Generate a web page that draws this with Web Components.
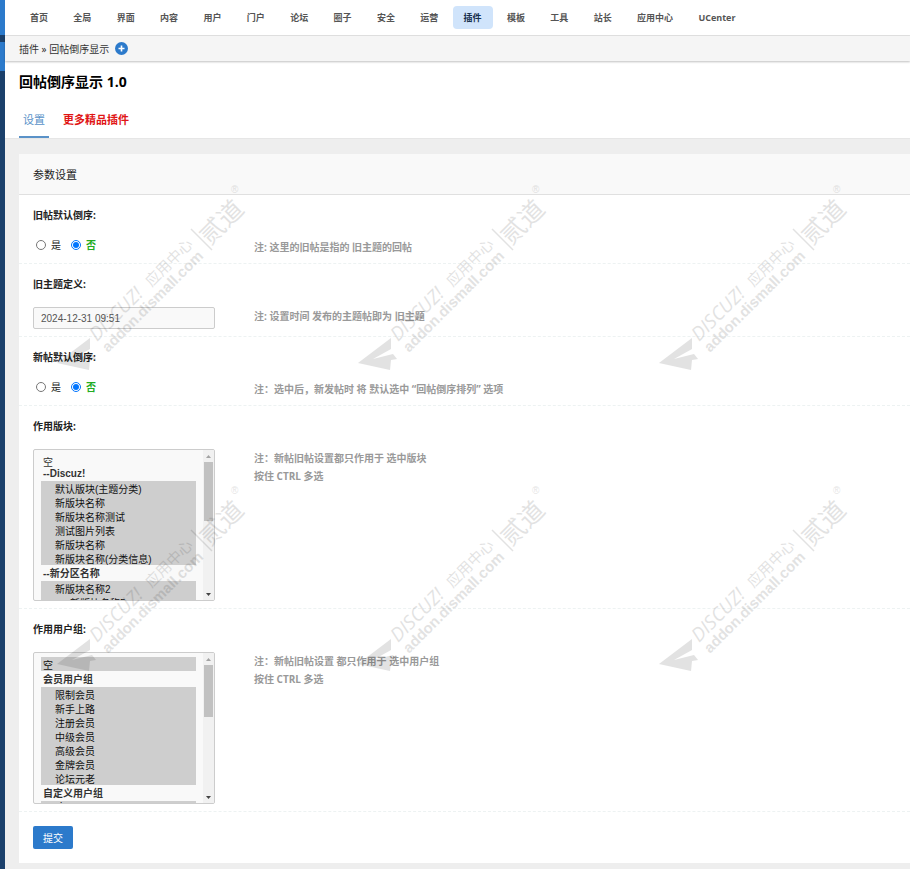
<!DOCTYPE html>
<html lang="zh-CN">
<head>
<meta charset="utf-8">
<title>回帖倒序显示 1.0</title>
<style>
  body {
    margin: 0;
    background: #eee;
    color: #222;
    font: 10px/14px "Open Sans", "Noto Sans CJK SC", sans-serif;
  }
</style>
</head>
<body>
<admin-shell>
  <top-nav slot="nav"></top-nav>
  <bread-crumb slot="crumb"></bread-crumb>
  <plugin-head slot="head"></plugin-head>
  <settings-panel></settings-panel>
</admin-shell>

<script>
class AdminShell extends HTMLElement {
  constructor() {
    super();
    this.attachShadow({ mode: 'open' });
  }

  connectedCallback() {
    this.shadowRoot.innerHTML = `
    <style>
      :host {
        display: flex;
        position: relative;
        min-height: 100vh;
      }

      aside {
        flex: none;
        width: 5px;
        background: linear-gradient(#2c7acb 35px, #1b406b 35px 42px, #2c7acb 42px 71px, #1b406b 71px);
      }

      .page {
        flex: 1;
        min-width: 0;
      }

      main {
        padding: 15px 0 6px 14px;
      }
    </style>
    <aside></aside>
    <div class="page">
      <slot name="nav"></slot>
      <slot name="crumb"></slot>
      <slot name="head"></slot>
      <main><slot></slot></main>
    </div>
    <water-mark></water-mark>
    `;
  }
}

class TopNav extends HTMLElement {
  constructor() {
    super();
    this.attachShadow({ mode: 'open' });
  }

  menus = ['首页', '全局', '界面', '内容', '用户', '门户', '论坛', '圈子', '安全', '运营', '插件', '模板', '工具', '站长', '应用中心', 'UCenter'];

  connectedCallback() {
    const items = this.menus.map(menu => `
      <a href="#" ${menu === '插件' ? 'class="active"' : ''}>${menu}</a>`
    ).join('');

    this.shadowRoot.innerHTML = `
    <style>
      :host {
        display: block;
        background: #fff;
        border-bottom: 1px solid #e2e2e2;
      }

      nav {
        padding: 6px 14px;
        font-family: "Liberation Sans", sans-serif;
        font-size: 12px;
        line-height: 23px;
        white-space: nowrap;
        overflow: hidden;
      }

      a {
        display: inline-block;
        vertical-align: top;
        padding: 0 11px;
        border-radius: 4px;
        color: #555;
        font: bold 9px/23px "Open Sans", "Noto Sans CJK SC", sans-serif;
        text-decoration: none;
      }

      .active {
        background: #d0e4fb;
        color: #17304d;
      }
    </style>
    <nav>${items}</nav>
    `;
  }
}

class BreadCrumb extends HTMLElement {
  constructor() {
    super();
    this.attachShadow({ mode: 'open' });
  }

  connectedCallback() {
    this.shadowRoot.innerHTML = `
    <style>
      :host {
        display: flex;
        position: relative;
        align-items: center;
        gap: 6px;
        height: 25px;
        padding-left: 14px;
        background: #f5f5f5;
        box-shadow: 0 1px 2px rgba(0, 0, 0, 0.25);
      }

      a {
        color: #333;
        text-decoration: none;
      }

      button {
        display: flex;
        padding: 0;
        border: none;
        background: none;
      }
    </style>
    <span><a href="#">插件</a> » <a href="#">回帖倒序显示</a></span>
    <button aria-label="添加">
      <svg width="13" height="13" viewBox="0 0 13 13">
        <circle cx="6.5" cy="6.5" r="6.5" fill="#2c7acb"/>
        <path d="M6.5 3.5v6M3.5 6.5h6" stroke="#fff" stroke-width="1.6"/>
      </svg>
    </button>
    `;
  }
}

class PluginHead extends HTMLElement {
  constructor() {
    super();
    this.attachShadow({ mode: 'open' });
  }

  connectedCallback() {
    this.shadowRoot.innerHTML = `
    <style>
      :host {
        display: block;
        padding: 11px 14px 0;
        background: #fff;
        border-bottom: 1px solid #e6e6e6;
      }

      h1 {
        margin: 0;
        color: #000;
        font-size: 14px;
        line-height: 20px;
      }

      nav {
        display: flex;
        gap: 10px;
        margin-top: 11px;
        font-size: 11px;
        line-height: 33px;
      }

      a {
        padding: 0 4px;
        border-bottom: 2px solid transparent;
        color: #5a92c8;
        text-decoration: none;
      }

      .current {
        border-color: #5a92c8;
      }

      .more {
        color: #e01515;
        font-weight: bold;
      }
    </style>
    <h1>回帖倒序显示 1.0</h1>
    <nav>
      <a class="current" href="#">设置</a>
      <a class="more" href="#">更多精品插件</a>
    </nav>
    `;
  }
}

// one setting: a label line, then the control with its note beside it
class FieldRow extends HTMLElement {
  constructor() {
    super();
    this.attachShadow({ mode: 'open' });
  }

  connectedCallback() {
    this.shadowRoot.innerHTML = `
    <style>
      :host {
        display: block;
        padding: 13px 14px 7px;
        border-bottom: 1px dashed #edf2f2;
      }

      .title {
        margin-bottom: 16px;
        font-weight: bold;
      }

      .body {
        display: grid;
        grid-template-columns: 182px 1fr;
        align-items: start;
        gap: 39px;
      }

      .note {
        color: #999;
        font-weight: bold;
        line-height: 18px;
      }
    </style>
    <div class="title"><slot name="title"></slot></div>
    <div class="body">
      <slot></slot>
      <div class="note"><slot name="note"></slot></div>
    </div>
    `;
  }
}

// frame for a list box, with a scroll bar that follows the slotted select
class ScrollFrame extends HTMLElement {
  constructor() {
    super();
    this.attachShadow({ mode: 'open' });
  }

  connectedCallback() {
    this.shadowRoot.innerHTML = `
    <style>
      :host {
        display: flex;
        box-sizing: border-box;
        height: 152px;
        border: 1px solid #ccc;
        border-radius: 2px;
        background: #f9f9f9;
        overflow: hidden;
      }

      .bar {
        display: flex;
        flex: none;
        flex-direction: column;
        width: 11px;
        background: #f1f1f1;
      }

      .track {
        flex: 1;
      }

      .thumb {
        margin: 0 1px;
        background: #c1c1c1;
      }
    </style>
    <slot></slot>
    <div class="bar">
      <svg width="11" height="12" viewBox="0 0 11 12"><path d="M3 8h5L5.500 5z" fill="#a3a3a3"/></svg>
      <div class="track"><div class="thumb"></div></div>
      <svg width="11" height="12" viewBox="0 0 11 12"><path d="M3 5h5L5.500 8z" fill="#444"/></svg>
    </div>
    `;
    this.setupScroll();
  }

  setupScroll() {
    const select = this.querySelector('select');
    const track = this.shadowRoot.querySelector('.track');
    const thumb = this.shadowRoot.querySelector('.thumb');

    const update = () => {
      const ratio = track.clientHeight / select.scrollHeight;
      thumb.style.height = `${Math.round(select.clientHeight * ratio)}px`;
      thumb.style.transform = `translateY(${Math.round(select.scrollTop * ratio)}px)`;
    };

    select.scrollTop = 0;
    select.addEventListener('scroll', update);
    update();
  }
}

class SettingsPanel extends HTMLElement {
  constructor() {
    super();
    this.attachShadow({ mode: 'open' });
  }

  forums = [
    { items: ['空'] },
    { label: '--Discuz!', selected: true, items: ['默认版块(主题分类)', '新版块名称', '新版块名称测试', '测试图片列表', '新版块名称', '新版块名称(分类信息)'] },
    { label: '--新分区名称', selected: true, items: ['新版块名称2', '&emsp;&ensp;新版块名称5', '新版块名称3', '新版块名称4', '新版块名称6', '新版块名称7'] },
    { label: '--分区', items: ['新版块名称8', '新版块名称9', '新版块名称10', '新版块名称11', '新版块名称12', '新版块名称13'] },
  ];

  groups = [
    { selected: true, items: ['空'] },
    { label: '会员用户组', selected: true, items: ['限制会员', '新手上路', '注册会员', '中级会员', '高级会员', '金牌会员', '论坛元老'] },
    { label: '自定义用户组', selected: true, items: ['vip', '实习站务', '网站编辑', '信息监察员', '审核员'] },
    { label: '系统用户组', items: ['管理员', '超级版主', '版主', '禁止发言', '禁止访问', '禁止 IP', '游客', '等待验证会员', 'QQ游客'] },
  ];

  renderOptions(list) {
    return list.map(group => {
      const options = group.items.map(item =>
        `<option ${group.selected ? 'selected' : ''}>${item}</option>`
      ).join('');
      return group.label ? `<optgroup label="${group.label}">${options}</optgroup>` : options;
    }).join('');
  }

  renderRadios(name) {
    return `
      <div class="radios">
        <label><input type="radio" name="${name}" value="1">是</label>
        <label class="on"><input type="radio" name="${name}" value="0" checked>否</label>
      </div>`;
  }

  connectedCallback() {
    this.shadowRoot.innerHTML = `
    <style>
      :host {
        display: block;
        background: #fff;
      }

      h2 {
        margin: 0;
        padding: 2px 14px 0;
        border-bottom: 1px solid #e0e0e0;
        background: #f9f9f9;
        font-size: 11px;
        font-weight: normal;
        line-height: 38px;
      }

      .radios {
        display: flex;
        gap: 7px;
        line-height: 12px;
      }

      .radios label {
        display: flex;
        align-items: center;
        gap: 2px;
        height: 14px;
      }

      .radios input {
        width: 10px;
        height: 10px;
        margin: 0 3px;
      }

      .on {
        color: #22ac22;
        font-weight: bold;
      }

      .text, select {
        box-sizing: border-box;
        color: #333;
        font: 10px/14px "Liberation Sans", "Noto Sans CJK SC", sans-serif;
      }

      .text {
        width: 100%;
        height: 22px;
        padding: 0 7px;
        border: 1px solid #ccc;
        border-radius: 2px;
        background: #f9f9f9;
        color: #555;
      }

      select {
        flex: 1;
        min-width: 0;
        height: 100%;
        padding: 4px 7px;
        border: none;
        background: none;
        scrollbar-width: none;
      }

      option {
        box-sizing: border-box;
        height: 14px;
        min-height: 14px;
        padding: 0 2px;
        line-height: 14px;
      }

      optgroup option {
        padding-left: 14px;
      }

      .submit {
        padding: 14px;
      }

      button {
        display: block;
        height: 23px;
        padding: 0 10px;
        border: none;
        border-radius: 2px;
        background: #2c7acb;
        color: #fff;
        font: inherit;
      }
    </style>
    <form>
      <h2>参数设置</h2>
      <field-row>
        <span slot="title">旧帖默认倒序:</span>
        ${this.renderRadios('old')}
        <span slot="note">注: 这里的旧帖是指的 旧主题的回帖</span>
      </field-row>
      <field-row>
        <label slot="title" for="date">旧主题定义:</label>
        <input class="text" id="date" type="text" value="2024-12-31 09:51">
        <span slot="note">注: 设置时间 发布的主题帖即为 旧主题</span>
      </field-row>
      <field-row>
        <span slot="title">新帖默认倒序:</span>
        ${this.renderRadios('new')}
        <span slot="note">注：选中后，新发帖时 将 默认选中 “回帖倒序排列” 选项</span>
      </field-row>
      <field-row>
        <label slot="title" for="forums">作用版块:</label>
        <scroll-frame><select id="forums" multiple>${this.renderOptions(this.forums)}</select></scroll-frame>
        <span slot="note">注：新帖旧帖设置都只作用于 选中版块<br>按住 CTRL 多选</span>
      </field-row>
      <field-row>
        <label slot="title" for="groups">作用用户组:</label>
        <scroll-frame><select id="groups" multiple>${this.renderOptions(this.groups)}</select></scroll-frame>
        <span slot="note">注：新帖旧帖设置 都只作用于 选中用户组<br>按住 CTRL 多选</span>
      </field-row>
      <div class="submit"><button type="button">提交</button></div>
    </form>
    `;
  }
}

// repeated diagonal mark, laid over the whole page
class WaterMark extends HTMLElement {
  constructor() {
    super();
    this.attachShadow({ mode: 'open' });
  }

  connectedCallback() {
    const mark = `
      <svg width="301" height="301" viewBox="0 100 301 301">
        <path d="M57 363L90 338V349L72 359L92 354L96 359L90 360L89 370Z"/>
        <g transform="translate(97 342) rotate(-45)">
          <text class="brand">DISCUZ!</text>
          <text class="thin" x="77">应用中心</text>
        </g>
        <text class="site" transform="translate(108 353) rotate(-45)">addon.dismall.com</text>
        <path d="M191 229l21 21" stroke="#000" stroke-width="1.5"/>
        <text class="owner" transform="translate(210 246) rotate(-45)">贰道</text>
        <text class="reg" x="231" y="193">®</text>
      </svg>`;

    this.shadowRoot.innerHTML = `
    <style>
      :host {
        position: absolute;
        inset: 100px 0 0;
        display: grid;
        grid-template-columns: repeat(auto-fill, 301px);
        align-content: start;
        overflow: hidden;
        opacity: 0.11;
        pointer-events: none;
      }

      .brand { font: italic 19px "Open Sans", sans-serif; }
      .thin { font: 15px "Noto Sans CJK SC", sans-serif; }
      .site { font: bold 15px "Liberation Sans", sans-serif; }
      .owner { font: 25px "Noto Sans CJK SC", sans-serif; }
      .reg { font: 10px "Liberation Sans", sans-serif; }
    </style>
    ${mark.repeat(6)}
    `;
  }
}

customElements.define('water-mark', WaterMark);
customElements.define('scroll-frame', ScrollFrame);
customElements.define('field-row', FieldRow);
customElements.define('top-nav', TopNav);
customElements.define('bread-crumb', BreadCrumb);
customElements.define('plugin-head', PluginHead);
customElements.define('settings-panel', SettingsPanel);
customElements.define('admin-shell', AdminShell);
</script>
</body>
</html>
